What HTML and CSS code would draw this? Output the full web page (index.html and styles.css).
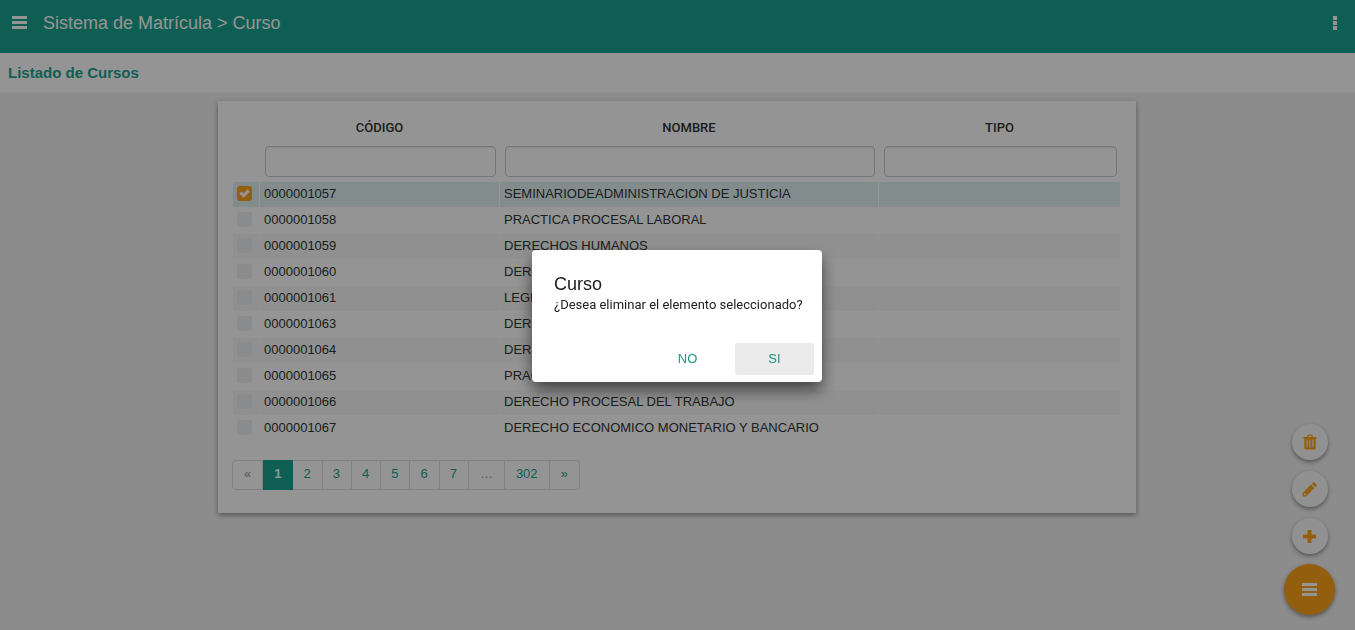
FILE: index.html
```html
<!DOCTYPE html>
<html lang="es">
<head>
<meta charset="utf-8">
<title>Sistema de Matrícula</title>
<link rel="stylesheet" href="styles.css">
</head>
<body>
<header class="topbar">
  <button class="icon-button" aria-label="Menú"><svg width="15" height="13" viewBox="0 0 15 13"><path d="M0 0h15v3H0zM0 5h15v3H0zM0 10h15v3H0z"/></svg></button>
  <h1 class="topbar-title">Sistema de Matrícula &gt; Curso</h1>
  <button class="icon-button" aria-label="Opciones"><svg width="4" height="14" viewBox="0 0 4 14"><path d="M0 0h4v4H0zM0 5h4v4H0zM0 10h4v4H0z"/></svg></button>
</header>
<h2 class="subtitle">Listado de Cursos</h2>
<main class="content">
  <section class="card">
    <table class="grid">
      <colgroup><col class="col-check"><col class="col-code"><col class="col-name"><col class="col-type"></colgroup>
      <thead>
        <tr class="head"><td></td><th scope="col">CÓDIGO</th><th scope="col">NOMBRE</th><th scope="col">TIPO</th></tr>
        <tr class="filters"><td></td><td><input class="filter" type="text" aria-label="Código"></td><td><input class="filter" type="text" aria-label="Nombre"></td><td><input class="filter" type="text" aria-label="Tipo"></td></tr>
      </thead>
      <tbody>
        <tr class="selected"><td><input class="check" type="checkbox" checked aria-label="0000001057"></td><td>0000001057</td><td>SEMINARIODEADMINISTRACION DE JUSTICIA</td><td></td></tr>
        <tr><td><input class="check" type="checkbox" aria-label="0000001058"></td><td>0000001058</td><td>PRACTICA PROCESAL LABORAL</td><td></td></tr>
        <tr><td><input class="check" type="checkbox" aria-label="0000001059"></td><td>0000001059</td><td>DERECHOS HUMANOS</td><td></td></tr>
        <tr><td><input class="check" type="checkbox" aria-label="0000001060"></td><td>0000001060</td><td>DERE</td><td></td></tr>
        <tr><td><input class="check" type="checkbox" aria-label="0000001061"></td><td>0000001061</td><td>LEGIS</td><td></td></tr>
        <tr><td><input class="check" type="checkbox" aria-label="0000001063"></td><td>0000001063</td><td>DERE</td><td></td></tr>
        <tr><td><input class="check" type="checkbox" aria-label="0000001064"></td><td>0000001064</td><td>DERE</td><td></td></tr>
        <tr><td><input class="check" type="checkbox" aria-label="0000001065"></td><td>0000001065</td><td>PRAC</td><td></td></tr>
        <tr><td><input class="check" type="checkbox" aria-label="0000001066"></td><td>0000001066</td><td>DERECHO PROCESAL DEL TRABAJO</td><td></td></tr>
        <tr><td><input class="check" type="checkbox" aria-label="0000001067"></td><td>0000001067</td><td>DERECHO ECONOMICO MONETARIO Y BANCARIO</td><td></td></tr>
      </tbody>
    </table>
    <nav class="pages" aria-label="Páginas">
      <span class="page wide muted">«</span>
      <a class="page current" href="#">1</a>
      <a class="page" href="#">2</a>
      <a class="page" href="#">3</a>
      <a class="page" href="#">4</a>
      <a class="page" href="#">5</a>
      <a class="page" href="#">6</a>
      <a class="page" href="#">7</a>
      <span class="page wide muted">…</span>
      <a class="page wide" href="#">302</a>
      <a class="page wide" href="#">»</a>
    </nav>
  </section>
</main>
<div class="actions">
  <button class="fab" aria-label="Eliminar"><svg width="14" height="16" viewBox="0 0 14 16"><path fill-rule="evenodd" d="M4 3C4 1.200 5 .5 7 .5s3 .7 3 2.500h3.500v1.500h-.8V14c0 1-.5 1.500-1.400 1.500H2.700c-.9 0-1.400-.5-1.400-1.500V4.500H.5V3zM5.300 3h3.400c0-.8-.5-1.200-1.700-1.200S5.300 2.200 5.300 3zM3.600 5.500v8h1v-8zM6.500 5.500v8h1v-8zM9.400 5.500v8h1v-8z"/></svg></button>
  <button class="fab" aria-label="Editar"><svg width="15" height="15" viewBox="0 0 15 15"><path fill-rule="evenodd" d="M9 2.500 12.500 6 4 14.500H.5V11zM1.700 11.500v1.300h.7l.9.900.9-.9-1.700-1.700zM9.800 1.700l1-1c.6-.6 1.300-.6 1.900 0l1.600 1.600c.6.600.6 1.300 0 1.900l-1 1z"/></svg></button>
  <button class="fab" aria-label="Agregar"><svg width="13" height="13" viewBox="0 0 13 13"><path d="M5 0h3q.5 0 .5.500v4h4q.5 0 .5.500v3q0 .5-.5.500h-4v4q0 .5-.5.500H5q-.5 0-.5-.5v-4h-4Q0 8.500 0 8V5q0-.5.500-.5h4v-4Q4.500 0 5 0z"/></svg></button>
  <button class="fab main" aria-label="Acciones"><svg width="15" height="13" viewBox="0 0 15 13"><path d="M0 0h15v3H0zM0 5h15v3H0zM0 10h15v3H0z"/></svg></button>
</div>
<div class="backdrop">
  <div class="dialog" role="dialog" aria-modal="true" aria-labelledby="dialog-title">
    <h2 class="dialog-title" id="dialog-title">Curso</h2>
    <p class="dialog-text">¿Desea eliminar el elemento seleccionado?</p>
    <div class="dialog-buttons">
      <button class="flat">NO</button>
      <button class="flat active">SI</button>
    </div>
  </div>
</div>
</body>
</html>
```
FILE: styles.css
```css
* { box-sizing: border-box; }
body {
  margin: 0;
  min-height: 100vh;
  background: #f1f1f1;
  color: #333;
  font: 13px/18px "Liberation Sans", Arial, sans-serif;
}
button { border: 0; padding: 0; background: none; font: inherit; color: inherit; cursor: pointer; }
svg { display: block; fill: currentColor; }
h1, h2, p { margin: 0; font-weight: 400; }

.topbar {
  display: flex;
  align-items: center;
  height: 53px;
  padding: 0 18px 8px 12px;
  background: #1aa392;
  color: #fff;
}
.topbar-title { flex: 1; margin-left: 16px; font-size: 18px; line-height: 24px; }
.subtitle {
  padding: 10px 8px;
  background: #fff;
  color: #1aa392;
  font-size: 15px;
  line-height: 20px;
  font-weight: 700;
}

.content { padding: 8px 17px 8px 16px; }
.card {
  max-width: 918px;
  margin: 0 auto;
  padding: 12px 15px 23px 14px;
  background: #fff;
  box-shadow: 0 2px 5px rgba(0, 0, 0, .4);
}
.grid { width: 100%; table-layout: fixed; border-collapse: separate; border-spacing: 1px; }
.col-check { width: 26px; }
.col-code { width: 239px; }
.col-type { width: 241px; }
.grid td { height: 25px; padding: 0 4px; line-height: 18px; vertical-align: middle; white-space: nowrap; }
.grid .head th { height: 26px; padding: 2px 0 0; font-family: Roboto, Arial, sans-serif; font-weight: 500; }
.grid .filters td { height: 40px; padding: 0 3px 0 5px; }
.grid tbody td { padding-bottom: 2px; }
.grid tbody tr:nth-child(odd) td { background: #f9f9f9; }
.grid tbody tr.selected td { background: #e0f2f1; }
.filter {
  display: block;
  width: 100%;
  height: 31px;
  border: 1px solid #ccc;
  border-radius: 4px;
  background: #fff;
  box-shadow: inset 0 1px 1px rgba(0, 0, 0, .08);
}
.check {
  appearance: none;
  display: block;
  width: 15px;
  height: 15px;
  margin: 0;
  border-radius: 3px;
  background: #eceff1;
}
.check:checked { background: #ffa31a; }
.check:checked::after {
  content: "";
  display: block;
  width: 15px;
  height: 15px;
  background: #fff;
  clip-path: polygon(16% 50%, 30% 36%, 44% 50%, 70% 22%, 85% 36%, 44% 78%);
}

.pages { display: flex; margin-top: 18px; }
.page {
  height: 30px;
  padding: 4px 11px 6px 10px;
  border: 1px solid #ddd;
  border-left-width: 0;
  color: #1aa392;
  text-decoration: none;
}
.page.wide { padding: 4px 11px 6px; }
.page:first-child { border-left-width: 1px; border-radius: 4px 0 0 4px; }
.page:last-child { border-radius: 0 4px 4px 0; }
.page.muted { color: #999; }
.page.current { padding: 4px 11px 6px; border-color: #1aa392; background: #1aa392; color: #fff; font-weight: 700; }

.actions {
  position: fixed;
  right: 20px;
  bottom: 15px;
  display: flex;
  flex-direction: column;
  align-items: center;
  gap: 11px;
}
.fab {
  display: grid;
  place-items: center;
  width: 36px;
  height: 36px;
  border-radius: 50%;
  background: #fafafa;
  color: #ffa31a;
  box-shadow: 0 2px 4px rgba(0, 0, 0, .4);
}
.fab.main { width: 51px; height: 51px; margin-top: -1px; background: #ffa31a; color: #fff; }

.backdrop {
  position: fixed;
  inset: 0;
  display: grid;
  place-items: center;
  padding: 2px 1px 0 0;
  background: rgba(0, 0, 0, .42);
}
.dialog {
  width: 290px;
  padding: 23px 8px 7px 22px;
  border-radius: 4px;
  background: #fff;
  color: #212121;
  box-shadow: 0 8px 16px rgba(0, 0, 0, .55);
}
.dialog-title { font-size: 18px; line-height: 23px; }
.dialog-text { font-family: Roboto, Arial, sans-serif; line-height: 18px; white-space: nowrap; }
.dialog-buttons { display: flex; justify-content: flex-end; gap: 8px; margin-top: 29px; }
.flat { width: 79px; height: 32px; border-radius: 2px; color: #1a9482; }
.flat.active { background: #ebebeb; }
```
